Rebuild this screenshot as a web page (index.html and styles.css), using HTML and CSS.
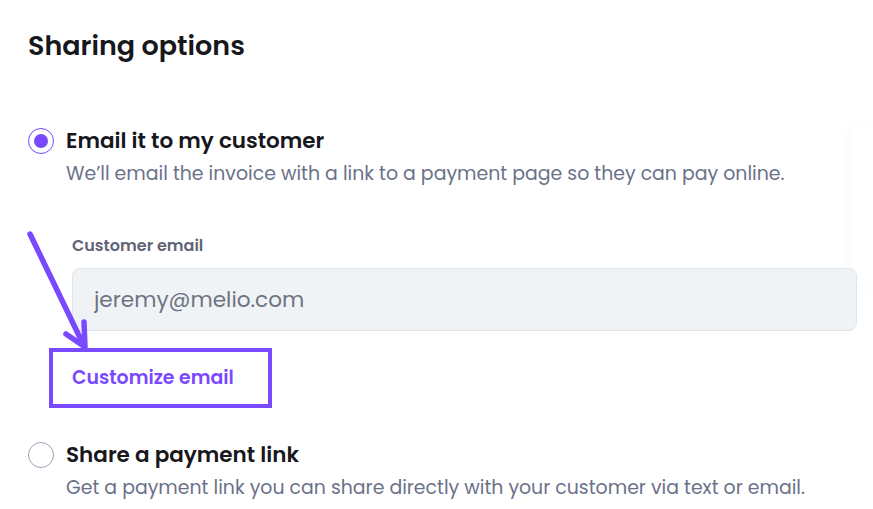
FILE: index.html
```html
<!DOCTYPE html>
<html lang="en">
<head>
    <meta charset="UTF-8">
    <meta name="viewport" content="width=device-width, initial-scale=1.0">
    <title>Sharing options</title>
    <link rel="stylesheet" href="styles.css">
</head>
<body>
    <div class="page">
        <h2 class="heading">Sharing options</h2>

        <div class="options">
            <div class="option">
                <span class="radio checked"></span>
                <div class="option-body">
                    <div class="option-title">Email it to my customer</div>
                    <div class="option-desc">We’ll email the invoice with a link to a payment page so they can pay online.</div>

                    <div class="field">
                        <label class="field-label" for="customerEmail">Customer email</label>
                        <input class="field-input" type="text" id="customerEmail" value="jeremy@melio.com">
                    </div>

                    <a class="customize" href="#">Customize email</a>
                </div>
            </div>

            <div class="option second">
                <span class="radio"></span>
                <div class="option-body">
                    <div class="option-title">Share a payment link</div>
                    <div class="option-desc">Get a payment link you can share directly with your customer via text or email.</div>
                </div>
            </div>
        </div>

        <!-- edge of a panel peeking in from the right -->
        <div class="side-panel"></div>

        <!-- annotation arrow pointing at the customize link -->
        <svg class="arrow" width="873" height="509" viewBox="0 0 873 509">
            <path d="M30 234 L84 346" />
            <path d="M66 334 L85 347 L84 322" />
        </svg>
    </div>
</body>
</html>
```

FILE: styles.css
```css
body {
    margin: 0;
    padding: 0;
    background: #fff;
    font-family: Poppins, Inter, sans-serif;
    color: #17171c;
}
.page {
    position: relative;
    width: 873px;
    height: 509px;
    padding: 28px 0 0 28px;
    box-sizing: border-box;
    overflow: hidden;
}
.heading {
    margin: 0;
    font-size: 27px;
    line-height: 36px;
    font-weight: 600;
}
.options {
    margin-top: 63px;
}
.option {
    display: grid;
    grid-template-columns: 26px 1fr;
    column-gap: 12px;
}
.option.second {
    margin-top: 33px;
}
.radio {
    width: 26px;
    height: 26px;
    margin-top: 1px;
    box-sizing: border-box;
    border: 1.5px solid #9ea3b5;
    border-radius: 50%;
    display: flex;
    align-items: center;
    justify-content: center;
}
.radio.checked {
    border-color: #7849ff;
}
.radio.checked::after {
    content: "";
    width: 14px;
    height: 14px;
    border-radius: 50%;
    background: #7849ff;
}
.option-title {
    font-size: 21.5px;
    line-height: 28px;
    font-weight: 600;
}
.option-desc {
    margin-top: 6px;
    font-size: 18.9px;
    line-height: 26px;
    color: #6a7189;
}
.field {
    margin: 49px 0 0 6px;
    width: 785px;
}
.field-label {
    display: block;
    font-size: 16px;
    line-height: 20px;
    font-weight: 600;
    color: #5f6577;
}
.field-input {
    position: relative;
    z-index: 1;
    display: block;
    width: 100%;
    height: 63px;
    margin-top: 12px;
    box-sizing: border-box;
    padding: 0 21px;
    border: 1px solid #e1e5ea;
    border-radius: 8px;
    background: #f0f3f6;
    font-family: inherit;
    font-size: 21.6px;
    color: #6d7383;
}
.customize {
    display: block;
    width: 223px;
    margin: 17px 0 0 -17px;
    padding: 15px 0 15px 19px;
    box-sizing: border-box;
    border: 4px solid #7849ff;
    font-size: 18.9px;
    line-height: 22px;
    font-weight: 600;
    color: #7849ff;
    text-decoration: none;
}
.side-panel {
    position: absolute;
    left: 852px;
    top: 126px;
    width: 60px;
    height: 160px;
    border-radius: 12px;
    background: #fff;
    box-shadow: -6px 0 14px rgba(0, 0, 0, 0.025);
}
.arrow {
    position: absolute;
    left: 0;
    top: 0;
    z-index: 2;
    pointer-events: none;
}
.arrow path {
    fill: none;
    stroke: #7849ff;
    stroke-width: 5.5;
    stroke-linecap: round;
    stroke-linejoin: round;
}
```
